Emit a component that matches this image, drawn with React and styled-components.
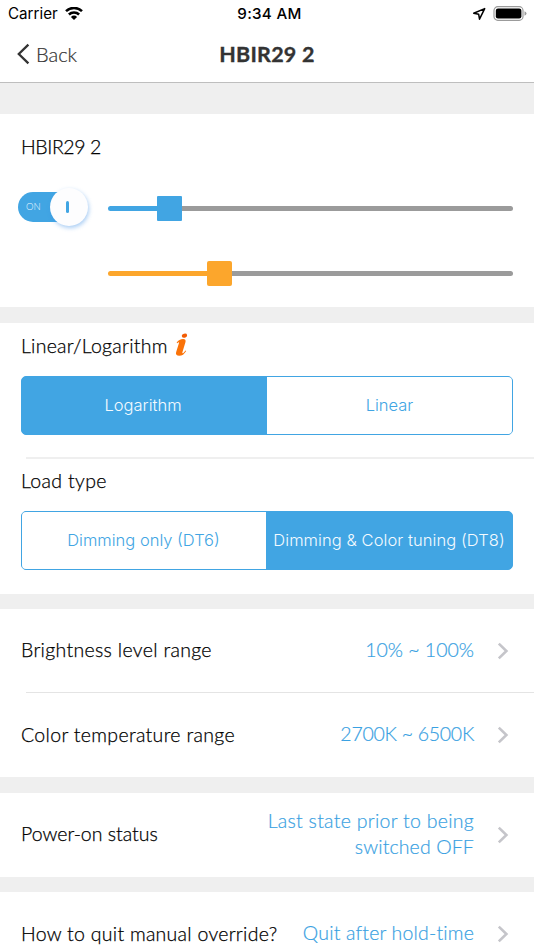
import React from "react";
import styled, { createGlobalStyle } from "styled-components";

const BLUE = "#41a5e3";
const ORANGE = "#fca62c";

const GlobalStyle = createGlobalStyle`
  * { box-sizing: border-box; }
  body { margin: 0; background: #efefef; overflow: hidden; }
`;

const Screen = styled.main`
  width: 534px;
  height: 950px;
  overflow: hidden;
  display: flex;
  flex-direction: column;
  background: #efefef;
  font-family: Lato, sans-serif;
  font-variant-ligatures: none;
  color: #000;
`;

const Header = styled.header`
  flex: none;
  height: 83px;
  background: #fff;
  border-bottom: 1px solid #bebebe;
`;

const StatusBar = styled.div`
  height: 27px;
  padding: 0 7px 0 8px;
  display: grid;
  grid-template-columns: 1fr auto 1fr;
  align-items: center;
  font: 400 15.2px/27px Inter, sans-serif;
  color: #000;
`;

const Carrier = styled.div`
  display: flex;
  align-items: center;
  gap: 7px;
`;

const Clock = styled.div`
  font-weight: 500;
  font-size: 15.2px;
  letter-spacing: 0.3px;
  padding-left: 4px;
`;

const Indicators = styled.div`
  display: flex;
  align-items: center;
  justify-content: flex-end;
  gap: 7px;
`;

const NavBar = styled.nav`
  height: 55px;
  padding: 0 16px 2px;
  display: grid;
  grid-template-columns: 1fr auto 1fr;
  align-items: center;
  color: #333;
`;

const BackButton = styled.button`
  display: flex;
  align-items: center;
  gap: 6px;
  padding: 0;
  border: 0;
  background: none;
  font: 300 20px/26px Lato, sans-serif;
  -webkit-text-stroke: 0.2px;
  color: #333;
`;

const Title = styled.h1`
  margin: 0;
  font: 700 21.5px/26px Lato, sans-serif;
  -webkit-text-stroke: 0.35px;
  letter-spacing: ${(p) => p.$track}px;
`;

const Section = styled.section`
  flex: none;
  margin-top: ${(p) => p.$gap}px;
  height: ${(p) => p.$height}px;
  background: #fff;
`;

const Label = styled.span`
  font-size: 19.5px;
  font-weight: 300;
  -webkit-text-stroke: 0.25px;
  line-height: 26px;
  white-space: nowrap;
  letter-spacing: ${(p) => p.$track || 0}px;
`;

const DeviceName = styled.div`
  padding: 20px 21px 0;
  height: 63px;
`;

const ControlGrid = styled.div`
  display: grid;
  grid-template-columns: 90px 405px;
  grid-template-rows: 64px 65px;
  align-items: center;
  padding-left: 18px;
`;

const Toggle = styled.button`
  display: flex;
  align-items: center;
  justify-content: space-between;
  width: 69.5px;
  height: 30px;
  padding: 0 0 0 8px;
  border: 0;
  border-radius: 15px;
  background: linear-gradient(90deg, ${BLUE} 54px, transparent 54px);
  font: 300 9.5px/30px Lato, sans-serif;
  color: #e8f5ff;
  margin-bottom: 4px;
`;

const Knob = styled.span`
  display: flex;
  align-items: center;
  justify-content: center;
  flex: none;
  width: 38px;
  height: 38px;
  border-radius: 50%;
  background: #fdfdfe;
  box-shadow: 1px 2px 4px rgba(65, 145, 230, 0.45);
`;

const KnobMark = styled.span`
  width: 3px;
  height: 12px;
  margin-right: 2px;
  border-radius: 1.5px;
  background: ${BLUE};
`;

const Slider = styled.div`
  grid-column: 2;
  display: flex;
  align-items: center;
`;

const Filled = styled.div`
  width: ${(p) => p.$width}px;
  height: 5px;
  border-radius: 3px 0 0 3px;
  background: ${(p) => p.$color};
`;

const Handle = styled.div`
  width: 25px;
  height: 25px;
  border-radius: ${(p) => p.$radius}px;
  background: ${(p) => p.$color};
`;

const Remaining = styled.div`
  flex: 1;
  height: 5px;
  border-radius: 0 3px 3px 0;
  background: #9b9b9b;
`;

const Heading = styled.div`
  display: flex;
  align-items: flex-start;
  gap: 7px;
  height: ${(p) => p.$height}px;
  padding: ${(p) => p.$top}px 21px 0;
`;

const Segments = styled.div`
  display: flex;
  width: 492px;
  height: 59px;
  margin-left: 21px;
  margin-bottom: ${(p) => p.$after || 0}px;
  border: 1px solid ${BLUE};
  border-radius: 5px;
  overflow: hidden;
  background: ${BLUE};
`;

const Segment = styled.button`
  width: ${(p) => p.$width}px;
  flex: none;
  padding: 0 ${(p) => p.$nudge || 0}px 1px 0;
  border: 0;
  background: ${(p) => (p.$active ? BLUE : "#fff")};
  color: ${(p) => (p.$active ? "#f4faff" : BLUE)};
  font: 350 16.5px/20px Inter, sans-serif;
  letter-spacing: ${(p) => p.$track || 0}px;
  white-space: nowrap;
`;

const Rule = styled.div`
  height: ${(p) => p.$weight}px;
  margin-left: 26px;
  background: ${(p) => p.$color};
`;

const Row = styled.div`
  display: flex;
  align-items: center;
  height: ${(p) => p.$height}px;
  padding: 0 25px 0 21px;
`;

const Value = styled.span`
  display: flex;
  flex-direction: column;
  align-items: flex-end;
  margin-left: auto;
  margin-right: 23px;
  padding-bottom: 2px;
  font-size: 19.5px;
  font-weight: 300;
  -webkit-text-stroke: 0.2px;
  line-height: 26px;
  color: #39a1e2;
`;

const ValueLine = styled.span`
  letter-spacing: ${(p) => p.$track}px;
`;

const RowLabel = styled(Label)`
  padding-bottom: 1px;
`;

const Chevron = () => (
  <svg width="12" height="18" viewBox="0 0 12 18" fill="none" stroke="#c5c5ca" strokeWidth="2.6">
    <path d="M1.8 1.6 9.4 9 1.8 16.4" />
  </svg>
);

const WifiIcon = () => (
  <svg width="18" height="14" viewBox="0 0 18 14" fill="none" stroke="#000" strokeWidth="2.5">
    <path d="M1 4.2a11.4 11.4 0 0 1 16 0M3.9 7.5a7.2 7.2 0 0 1 10.2 0" />
    <path d="M9 13 5.9 9.9a4.4 4.4 0 0 1 6.2 0z" fill="#000" stroke="none" />
  </svg>
);

const LocationIcon = () => (
  <svg width="14" height="14" viewBox="0 0 14 14" fill="none" stroke="#000" strokeWidth="1.5" strokeLinejoin="round">
    <path d="M12.7 1.6 1.7 6.3l5 1 .8 4.9z" />
  </svg>
);

const BatteryIcon = () => (
  <svg width="34" height="15" viewBox="0 0 34 15">
    <rect x="1" y="0.7" width="29" height="13.6" rx="3.8" fill="none" stroke="#9b9b9b" strokeWidth="1.2" />
    <rect x="2.8" y="2.6" width="25.6" height="9.9" rx="2.2" />
    <path d="M31.5 5.3q2 .7 2 2.2t-2 2.2z" fill="#9b9b9b" />
  </svg>
);

const BackIcon = () => (
  <svg width="14" height="22" viewBox="0 0 14 22" fill="none" stroke="#333" strokeWidth="2.3">
    <path d="M12.4 1.6 2.8 11l9.6 9.4" />
  </svg>
);

const InfoIcon = () => (
  <svg width="13" height="24" viewBox="0 0 13 24" fill="#fa7309">
    <ellipse cx="9.5" cy="2.7" rx="2.7" ry="2" transform="rotate(-15 9.5 2.7)" fill="#f25c05" />
    <path d="M1.6 9.7C3.3 7.3 5.6 6.2 8 6.1c2-.1 3 1 2.5 2.8L7.4 19.3c-.3 1 .2 1.3 1 .6l2.2-2.5.6.5c-2 3.2-4.1 4.9-7 4.9-2.6 0-3.7-1.3-3.1-3.5L4 9.9c.2-.8-.1-1-.7-.5l-1 .9z" />
  </svg>
);

const SettingRow = ({ label, lines, height, track }) => (
  <Row $height={height}>
    <RowLabel $track={track}>{label}</RowLabel>
    <Value>
      {lines.map((line) => (
        <ValueLine key={line.text} $track={line.track}>{line.text}</ValueLine>
      ))}
    </Value>
    <Chevron />
  </Row>
);

export default function App() {
  return (
    <Screen>
      <GlobalStyle />
      <Header>
        <StatusBar>
          <Carrier>Carrier<WifiIcon /></Carrier>
          <Clock>9:34 AM</Clock>
          <Indicators><LocationIcon /><BatteryIcon /></Indicators>
        </StatusBar>
        <NavBar>
          <BackButton><BackIcon />Back</BackButton>
          <Title $track={0.25}>HBIR29 2</Title>
        </NavBar>
      </Header>

      <Section $gap={30.5} $height={193.5}>
        <DeviceName><Label $track={-0.4}>HBIR29 2</Label></DeviceName>
        <ControlGrid>
          <Toggle>ON<Knob><KnobMark /></Knob></Toggle>
          <Slider>
            <Filled $width={48.5} $color={BLUE} />
            <Handle $color={BLUE} $radius={1} />
            <Remaining />
          </Slider>
          <Slider>
            <Filled $width={98.5} $color={ORANGE} />
            <Handle $color={ORANGE} $radius={2} />
            <Remaining />
          </Slider>
        </ControlGrid>
      </Section>

      <Section $gap={15.5} $height={271.5}>
        <Heading $top={10.5} $height={53.5}>
          <Label $track={0.25}>Linear/Logarithm</Label>
          <InfoIcon />
        </Heading>
        <Segments $after={22}>
          <Segment $active $width={245} $nudge={3}>Logarithm</Segment>
          <Segment $width={245}>Linear</Segment>
        </Segments>
        <Rule $weight={2} $color="#efefef" />
        <Heading $top={9} $height={52}>
          <Label $track={0.35}>Load type</Label>
        </Heading>
        <Segments>
          <Segment $width={244} $nudge={1}>Dimming only (DT6)</Segment>
          <Segment $active $width={246} $track={0.07}>Dimming &amp; Color tuning (DT8)</Segment>
        </Segments>
      </Section>

      <Section $gap={15} $height={168}>
        <SettingRow height={83} label="Brightness level range" track={0.32} lines={[{ text: "10% ~ 100%", track: 0 }]} />
        <Rule $weight={1} $color="#e4e4e4" />
        <SettingRow height={84} label="Color temperature range" track={0.33} lines={[{ text: "2700K ~ 6500K", track: -0.27 }]} />
      </Section>

      <Section $gap={15.5} $height={84}>
        <SettingRow
          height={84}
          label="Power-on status"
          track={0}
          lines={[
            { text: "Last state prior to being", track: 0.28 },
            { text: "switched OFF", track: 0.12 },
          ]}
        />
      </Section>

      <Section $gap={15.5} $height={84}>
        <SettingRow height={84} label="How to quit manual override?" track={0.28} lines={[{ text: "Quit after hold-time", track: 0.18 }]} />
      </Section>
    </Screen>
  );
}
